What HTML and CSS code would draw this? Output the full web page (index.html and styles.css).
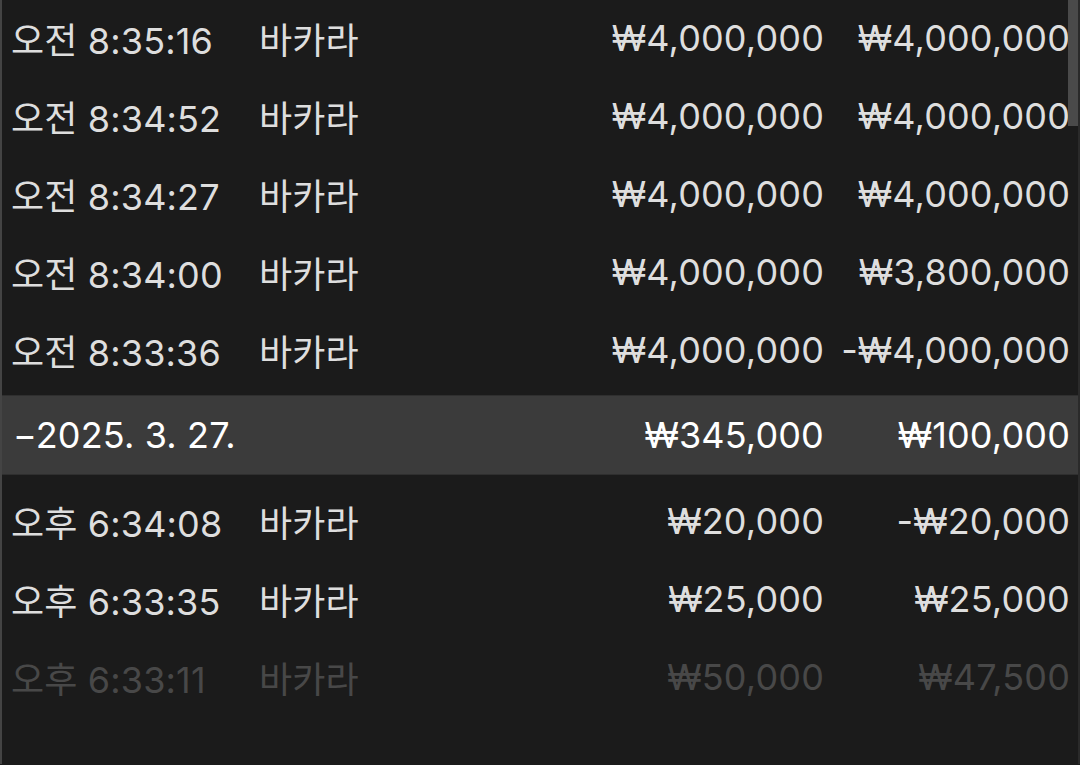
FILE: index.html
```html
<!DOCTYPE html>
<html lang="ko">

<head>
    <meta charset="UTF-8">
    <meta name="viewport" content="width=device-width, initial-scale=1.0">
    <title>베팅 내역</title>
    <link rel="stylesheet" href="styles.css">
</head>

<body>
    <div class="history">
        <div class="scroll-thumb"></div>

        <div class="row">
            <span class="time">오전 8:35:16</span>
            <span class="game">바카라</span>
            <span class="bet">₩4,000,000</span>
            <span class="win">₩4,000,000</span>
        </div>
        <div class="row">
            <span class="time">오전 8:34:52</span>
            <span class="game">바카라</span>
            <span class="bet">₩4,000,000</span>
            <span class="win">₩4,000,000</span>
        </div>
        <div class="row">
            <span class="time">오전 8:34:27</span>
            <span class="game">바카라</span>
            <span class="bet">₩4,000,000</span>
            <span class="win">₩4,000,000</span>
        </div>
        <div class="row">
            <span class="time">오전 8:34:00</span>
            <span class="game">바카라</span>
            <span class="bet">₩4,000,000</span>
            <span class="win">₩3,800,000</span>
        </div>
        <div class="row">
            <span class="time">오전 8:33:36</span>
            <span class="game">바카라</span>
            <span class="bet">₩4,000,000</span>
            <span class="win">-₩4,000,000</span>
        </div>

        <div class="row group">
            <span class="date">−2025. 3. 27.</span>
            <span class="bet">₩345,000</span>
            <span class="win">₩100,000</span>
        </div>

        <div class="row">
            <span class="time">오후 6:34:08</span>
            <span class="game">바카라</span>
            <span class="bet">₩20,000</span>
            <span class="win">-₩20,000</span>
        </div>
        <div class="row">
            <span class="time">오후 6:33:35</span>
            <span class="game">바카라</span>
            <span class="bet">₩25,000</span>
            <span class="win">₩25,000</span>
        </div>
        <div class="row faded">
            <span class="time">오후 6:33:11</span>
            <span class="game">바카라</span>
            <span class="bet">₩50,000</span>
            <span class="win">₩47,500</span>
        </div>
    </div>
</body>

</html>
```

FILE: styles.css
```css
body {
    margin: 0;
    background-color: #1b1b1b;
    color: #dedede;
    font-family: 'Inter', 'Noto Sans CJK KR', sans-serif;
    overflow: hidden;
}

.history {
    position: relative;
    height: 765px;
    margin-top: -1px;
    border-left: 2px solid #444;
    border-right: 2px solid #2a2a2a;
    box-sizing: border-box;
}

.scroll-thumb {
    position: absolute;
    top: 0;
    right: 0;
    width: 10px;
    height: 127px;
    background-color: #4a4a4a;
}

.row {
    display: grid;
    grid-template-columns: 248px 1fr 237px 246px;
    align-items: center;
    height: 78px;
    padding: 0 8px 0 9px;
    font-size: 36px;
    letter-spacing: 0.15px;
}

.time {
    white-space: nowrap;
}

.bet,
.win {
    text-align: right;
    white-space: nowrap;
}

.group {
    grid-template-columns: 1fr 237px 246px;
    height: 78px;
    margin: 6px 0 7px;
    background-color: #3b3b3b;
    border-top: 1px solid #2f2f2f;
    border-bottom: 1px solid #2f2f2f;
    color: #fff;
}

.date {
    padding-left: 2px;
}

.faded {
    color: #484848;
}
```
